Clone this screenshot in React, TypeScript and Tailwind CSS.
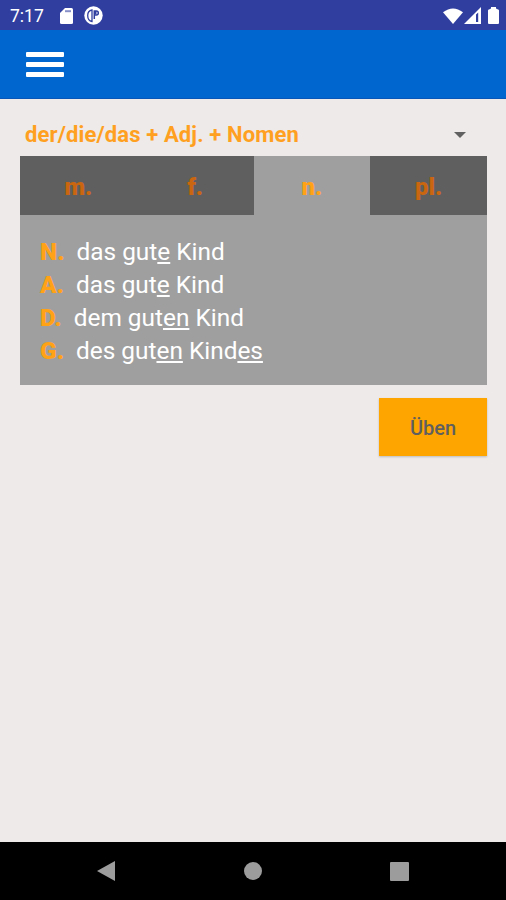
import { useState } from "react";

const tabs = ["m.", "f.", "n.", "pl."];

function StatusBar() {
  return (
    <div className="flex h-[30px] items-center justify-between bg-[#303f9f] pl-[10px] pr-[7px] pt-[1px] text-white">
      <div className="flex items-center">
        <span className="w-[50px] text-[17.500px] leading-[20px]">7:17</span>
        <svg width="13" height="16" viewBox="0 0 13 16" fill="currentColor">
          <path d="M5 0h6.500Q13 0 13 1.500v13q0 1.500-1.500 1.500h-10Q0 16 0 14.500V5z" />
          <path d="M5 2.200h6v2H5z" fill="#8890c8" />
        </svg>
        <svg className="ml-[11px]" width="19" height="19" viewBox="0 0 19 19">
          <circle cx="9.500" cy="9.500" r="9.200" fill="white" />
          <path d="M8 4v11.500C5 15 3.700 12.500 3.700 9.500S5 4.500 8 4z" fill="none" stroke="#303f9f" strokeWidth="1.300" />
          <path d="M10.300 13V5h2a2 2 0 0 1 0 4h-1.500" fill="none" stroke="#303f9f" strokeWidth="1.500" />
          <path d="M10.500 5h2v3.500h-2z" fill="#303f9f" />
        </svg>
      </div>
      <div className="flex items-center">
        <svg width="20" height="16" viewBox="0 0 20 16" fill="currentColor">
          <path d="M0 4.200Q10-3.400 20 4.200L10 16z" />
        </svg>
        <svg className="ml-[1px]" width="17" height="17" viewBox="0 0 17 17" fill="currentColor">
          <path fillRule="evenodd" d="M17 0v17H0zM12 7.500v7.500h2.200V5.500z" />
        </svg>
        <svg className="ml-[7px]" width="11" height="17" viewBox="0 0 11 17" fill="currentColor">
          <path d="M3 0h5v1.500l2 1q1 0 1 1V16q0 1-1 1H1q-1 0-1-1V3.500q0-1 1-1l2-1z" />
        </svg>
      </div>
    </div>
  );
}

function CaseLabel({ children }: { children: string }) {
  return <span className="font-black text-[#ffa216]">{children}</span>;
}

export default function App() {
  const [active, setActive] = useState(2);

  return (
    <div className="flex h-[900px] w-[506px] flex-col overflow-hidden bg-[#edeae9] font-['Roboto',sans-serif]">
      <StatusBar />

      <header className="flex h-[69px] items-center border-b border-[#0756b8] bg-[#0066cf] pl-[26px]">
        <button type="button" aria-label="Menu" className="flex w-[38px] flex-col gap-[5px] pt-[1px]">
          <span className="h-[5px] w-full rounded-[1px] bg-white" />
          <span className="h-[5px] w-full rounded-[1px] bg-white" />
          <span className="h-[5px] w-full rounded-[1px] bg-white" />
        </button>
      </header>

      <main className="flex flex-1 flex-col pl-[20px] pr-[19px]">
        <div className="flex h-[57px] items-center justify-between pl-[5px] pr-[21px] pt-[14px]">
          <span className="text-[22px] font-bold leading-[26px] tracking-[0.13px] text-[#ffa021]">der/die/das + Adj. + Nomen</span>
          <svg width="12" height="6" viewBox="0 0 12 6" fill="#616161">
            <path d="M0 0h12L6 6z" />
          </svg>
        </div>

        <section className="h-[229px] bg-[#9f9f9f]">
          <div className="grid h-[59px] grid-cols-4">
            {tabs.map((tab, i) => (
              <button
                key={tab}
                type="button"
                onClick={() => setActive(i)}
                className={`pt-[3px] text-[24px] font-black ${i === active ? "bg-[#9f9f9f] text-[#ffa216]" : "bg-[#5f5f5f] text-[#c9660f]"}`}
              >
                {tab}
              </button>
            ))}
          </div>

          <div className="pl-[20px] pt-[21.300px] text-[24.400px] leading-[32.800px] text-white [&_u]:decoration-[1.500px] [&_u]:underline-offset-[2px]">
            <div className="flex gap-[12px]">
              <CaseLabel>N.</CaseLabel>
              <span>das gut<u>e</u> Kind</span>
            </div>
            <div className="flex gap-[12px]">
              <CaseLabel>A.</CaseLabel>
              <span>das gut<u>e</u> Kind</span>
            </div>
            <div className="flex gap-[12px]">
              <CaseLabel>D.</CaseLabel>
              <span>dem gut<u>en</u> Kind</span>
            </div>
            <div className="flex gap-[12px]">
              <CaseLabel>G.</CaseLabel>
              <span>des gut<u>en</u> Kind<u>es</u></span>
            </div>
          </div>
        </section>

        <button
          type="button"
          className="mt-[13px] h-[58px] w-[108px] self-end bg-[#ffa500] pt-[2px] text-[20px] font-medium text-[#5f5f5f] shadow-[0_1px_2px_rgba(0,0,0,0.2)]"
        >
          Üben
        </button>
      </main>

      <nav className="flex h-[58px] items-center justify-between bg-black pl-[97px] pr-[97px]">
        <svg width="18" height="20" viewBox="0 0 18 20" fill="#9c9c9c">
          <path d="M18 0v20L0 10z" />
        </svg>
        <span className="size-[18px] rounded-full bg-[#9c9c9c]" />
        <span className="size-[19px] rounded-[1px] bg-[#9c9c9c]" />
      </nav>
    </div>
  );
}
